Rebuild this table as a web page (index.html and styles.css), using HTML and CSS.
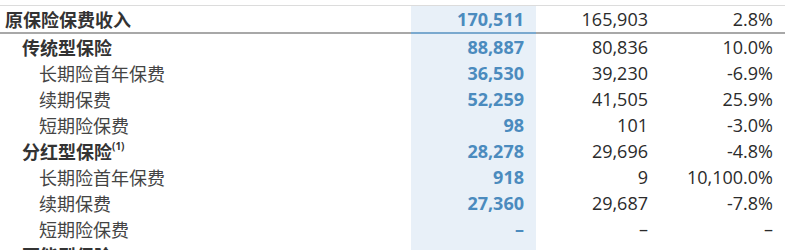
FILE: index.html
```html
<!DOCTYPE html>
<html lang="zh-CN">

<head>
    <meta charset="UTF-8">
    <meta name="viewport" content="width=device-width, initial-scale=1.0">
    <title>原保险保费收入</title>
    <link rel="stylesheet" href="styles.css">
</head>

<body>
    <table class="premiums">
        <colgroup>
            <col class="col-label">
            <col class="col-cur">
            <col class="col-prev">
            <col class="col-change">
        </colgroup>
        <tr class="total">
            <td class="label">原保险保费收入</td>
            <td class="num cur">170,511</td>
            <td class="num">165,903</td>
            <td class="num">2.8%</td>
        </tr>
        <tr class="group">
            <td class="label">传统型保险</td>
            <td class="num cur">88,887</td>
            <td class="num">80,836</td>
            <td class="num">10.0%</td>
        </tr>
        <tr class="item">
            <td class="label">长期险首年保费</td>
            <td class="num cur">36,530</td>
            <td class="num">39,230</td>
            <td class="num">-6.9%</td>
        </tr>
        <tr class="item">
            <td class="label">续期保费</td>
            <td class="num cur">52,259</td>
            <td class="num">41,505</td>
            <td class="num">25.9%</td>
        </tr>
        <tr class="item">
            <td class="label">短期险保费</td>
            <td class="num cur">98</td>
            <td class="num">101</td>
            <td class="num">-3.0%</td>
        </tr>
        <tr class="group">
            <td class="label">分红型保险<sup>(1)</sup></td>
            <td class="num cur">28,278</td>
            <td class="num">29,696</td>
            <td class="num">-4.8%</td>
        </tr>
        <tr class="item">
            <td class="label">长期险首年保费</td>
            <td class="num cur">918</td>
            <td class="num">9</td>
            <td class="num">10,100.0%</td>
        </tr>
        <tr class="item">
            <td class="label">续期保费</td>
            <td class="num cur">27,360</td>
            <td class="num">29,687</td>
            <td class="num">-7.8%</td>
        </tr>
        <tr class="item">
            <td class="label">短期险保费</td>
            <td class="num cur">–</td>
            <td class="num">–</td>
            <td class="num">–</td>
        </tr>
        <tr class="group">
            <td class="label">万能型保险</td>
            <td class="num cur"></td>
            <td class="num"></td>
            <td class="num"></td>
        </tr>
    </table>
</body>

</html>
```

FILE: styles.css
```css
body {
    margin: 0;
    padding-top: 5px;
    background-color: #fff;
    font-family: "Open Sans", "Noto Sans CJK SC", sans-serif;
    font-size: 18px;
    color: #2b2b2b;
}

.premiums {
    width: 785px;
    table-layout: fixed;
    border-collapse: collapse;
    border-top: 1px solid #dcdcdc;
}

.col-label {
    width: 411px;
}

.col-cur {
    width: 125px;
}

.col-prev {
    width: 124px;
}

.col-change {
    width: 125px;
}

.premiums td {
    padding: 0 12px 0 0;
    height: 26px;
    line-height: 26px;
    white-space: nowrap;
}

.label {
    font-family: "Noto Sans CJK SC", sans-serif;
    color: #333;
}

.num {
    text-align: right;
}

.cur {
    background-color: #e8f0f8;
    color: #4b8bbe;
    font-weight: bold;
}

.total td {
    border-bottom: 2px solid #a8a8a8;
}

.total .cur {
    border-bottom-color: #7aa9cf;
}

.total .label {
    padding-left: 5px;
    font-weight: bold;
}

.group .label {
    padding-left: 22px;
    font-weight: bold;
}

.item .label {
    padding-left: 39px;
    color: #444;
}

sup {
    font-family: "Open Sans", sans-serif;
    font-size: 10px;
    font-weight: bold;
    line-height: 0;
    vertical-align: 9px;
}
```
